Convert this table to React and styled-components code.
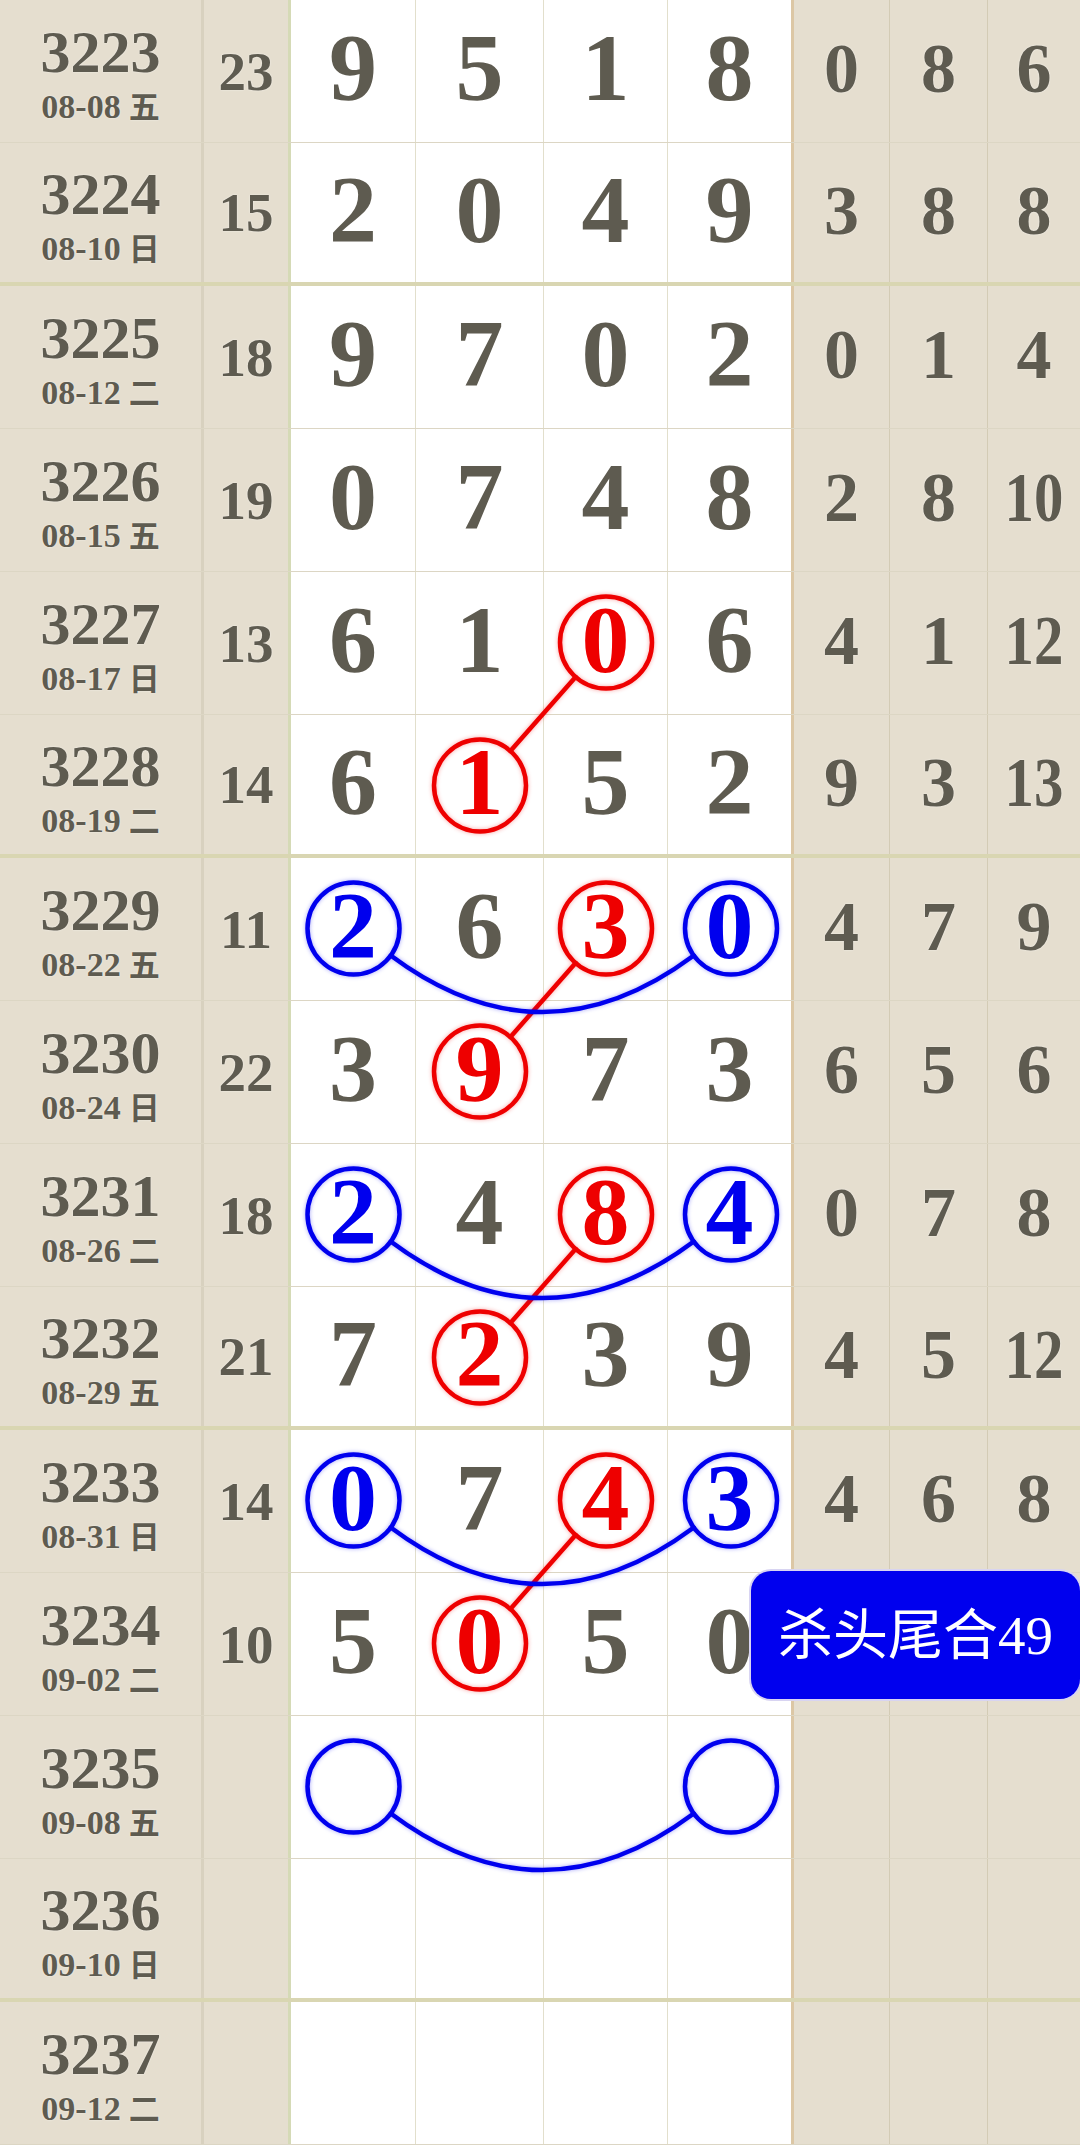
import React from 'react';
import styled, { createGlobalStyle } from 'styled-components';

const ROW_H = 143;
const COL_W = [204, 87, 125, 128, 124, 126, 96, 98, 92];
const INK = '#5e5b50';
const BLUE = '#0000ee';
const RED = '#ee0000';
const R = 46;

const COL_X = COL_W.reduce((acc, w) => [...acc, acc[acc.length - 1] + w], [0]);
const mainCenter = (i) => (COL_X[2 + i] + COL_X[3 + i]) / 2;
const rowCenter = (r) => r * ROW_H + ROW_H / 2 - 1;

const rows = [
  { no: 3223, date: '08-08', day: '五', sum: 23, main: [9, 5, 1, 8], tail: [0, 8, 6] },
  { no: 3224, date: '08-10', day: '日', sum: 15, main: [2, 0, 4, 9], tail: [3, 8, 8] },
  { no: 3225, date: '08-12', day: '二', sum: 18, main: [9, 7, 0, 2], tail: [0, 1, 4] },
  { no: 3226, date: '08-15', day: '五', sum: 19, main: [0, 7, 4, 8], tail: [2, 8, 10] },
  { no: 3227, date: '08-17', day: '日', sum: 13, main: [6, 1, 0, 6], tail: [4, 1, 12] },
  { no: 3228, date: '08-19', day: '二', sum: 14, main: [6, 1, 5, 2], tail: [9, 3, 13] },
  { no: 3229, date: '08-22', day: '五', sum: 11, main: [2, 6, 3, 0], tail: [4, 7, 9] },
  { no: 3230, date: '08-24', day: '日', sum: 22, main: [3, 9, 7, 3], tail: [6, 5, 6] },
  { no: 3231, date: '08-26', day: '二', sum: 18, main: [2, 4, 8, 4], tail: [0, 7, 8] },
  { no: 3232, date: '08-29', day: '五', sum: 21, main: [7, 2, 3, 9], tail: [4, 5, 12] },
  { no: 3233, date: '08-31', day: '日', sum: 14, main: [0, 7, 4, 3], tail: [4, 6, 8] },
  { no: 3234, date: '09-02', day: '二', sum: 10, main: [5, 0, 5, 0], tail: ['', '', ''] },
  { no: 3235, date: '09-08', day: '五', sum: '', main: ['', '', '', ''], tail: ['', '', ''] },
  { no: 3236, date: '09-10', day: '日', sum: '', main: ['', '', '', ''], tail: ['', '', ''] },
  { no: 3237, date: '09-12', day: '二', sum: '', main: ['', '', '', ''], tail: ['', '', ''] },
];

// rows closing a group of four get the heavier rule
const groupEnds = [1, 5, 9, 13];

const marks = [
  [4, 2, 'red'], [5, 1, 'red'],
  [6, 0, 'blue'], [6, 2, 'red'], [6, 3, 'blue'], [7, 1, 'red'],
  [8, 0, 'blue'], [8, 2, 'red'], [8, 3, 'blue'], [9, 1, 'red'],
  [10, 0, 'blue'], [10, 2, 'red'], [10, 3, 'blue'], [11, 1, 'red'],
  [12, 0, 'blue'], [12, 3, 'blue'],
];
const markColor = (r, c) => {
  const m = marks.find(([mr, mc]) => mr === r && mc === c);
  return m ? (m[2] === 'red' ? RED : BLUE) : null;
};

const redLinks = [[4, 5], [6, 7], [8, 9], [10, 11]];
const blueArcs = [6, 8, 10, 12];

const GlobalStyle = createGlobalStyle`
  html, body {
    margin: 0;
    padding: 0;
    background: #ffffff;
    overflow: hidden;
  }
  body {
    font-family: "Liberation Serif", "Noto Sans CJK SC", serif;
  }
`;

const Board = styled.div`
  position: relative;
  width: 1080px;
`;

const Row = styled.div`
  display: grid;
  grid-template-columns: ${COL_W.map((w) => `${w}px`).join(' ')};
  height: ${ROW_H}px;
  box-sizing: border-box;
  border-bottom: ${(p) => (p.$thick ? '4px solid #d9d6b2' : '1px solid #dcd6c4')};
`;

const Cell = styled.div`
  display: flex;
  align-items: center;
  justify-content: center;
  box-sizing: border-box;
  background: ${(p) => (p.$white ? '#ffffff' : '#e5decf')};
  border-right: ${(p) => p.$edge || 'none'};
  color: ${INK};
  font-weight: 700;
  text-shadow: 0 0 2px rgba(255, 255, 255, 0.7);
`;

const DateCell = styled(Cell)`
  flex-direction: column;
  gap: 7px;
  padding-top: 4px;
`;

const IssueNo = styled.div`
  font-size: 60px;
  line-height: 1;
`;

const IssueDate = styled.div`
  font-size: 34px;
  line-height: 1;
  display: flex;
  align-items: baseline;
  gap: 8px;
`;

const Weekday = styled.span`
  font-family: "Noto Sans CJK SC", sans-serif;
  font-size: 31px;
  font-weight: 700;
`;

const SumNum = styled.div`
  font-size: 55px;
  line-height: 1;
`;

const MainNum = styled.div`
  font-size: 96px;
  line-height: 1;
  padding-bottom: 6px;
  color: ${(p) => p.$color || INK};
`;

const TailNum = styled.div`
  font-size: 70px;
  line-height: 1;
  padding-bottom: 4px;
  transform: ${(p) => (p.$wide ? 'scaleX(0.84)' : 'none')};
`;

const Overlay = styled.svg`
  position: absolute;
  left: 0;
  top: 0;
  pointer-events: none;
`;

const Mark = styled.g`
  fill: none;
  stroke: ${(p) => p.$color};
  stroke-width: 4.5px;
  stroke-linecap: round;
  filter: drop-shadow(0 0 2px ${(p) => (p.$color === RED ? 'rgba(238,0,0,0.35)' : 'rgba(0,0,238,0.35)')});
`;

const Badge = styled.div`
  position: absolute;
  left: 751px;
  top: 1571px;
  width: 329px;
  height: 128px;
  box-sizing: border-box;
  display: flex;
  align-items: center;
  justify-content: center;
  background: ${BLUE};
  border-radius: 20px;
  box-shadow: 0 0 0 2px #d8d4f2;
  color: #ffffff;
  font-family: "Liberation Serif", "Noto Sans CJK SC", serif;
  font-size: 55px;
  line-height: 1;
`;

const edges = [
  '3px solid #d8d1bf',
  '3px solid #d5dab6',
  '1px solid #e2dfcc',
  '1px solid #e2dfcc',
  '1px solid #e2dfcc',
  '3px solid #dcc7a5',
  '1px solid #d3cbb5',
  '1px solid #d3cbb5',
  'none',
];

function arcPath(r) {
  const cy = rowCenter(r);
  const x1 = mainCenter(0);
  const x2 = mainCenter(3);
  const dx = R * Math.cos((36 * Math.PI) / 180);
  const dy = R * Math.sin((36 * Math.PI) / 180);
  return `M ${x1 + dx} ${cy + dy} Q ${(x1 + x2) / 2} ${cy + 140} ${x2 - dx} ${cy + dy}`;
}

function linkPoints(a, b) {
  const ax = mainCenter(2);
  const ay = rowCenter(a);
  const bx = mainCenter(1);
  const by = rowCenter(b);
  const len = Math.hypot(bx - ax, by - ay);
  const ux = (bx - ax) / len;
  const uy = (by - ay) / len;
  return { x1: ax + ux * R, y1: ay + uy * R, x2: bx - ux * R, y2: by - uy * R };
}

export default function App() {
  const height = rows.length * ROW_H;
  return (
    <>
      <GlobalStyle />
      <Board>
        {rows.map((row, r) => (
          <Row key={row.no} $thick={groupEnds.includes(r)}>
            <DateCell $edge={edges[0]}>
              <IssueNo>{row.no}</IssueNo>
              <IssueDate>
                {row.date}
                <Weekday>{row.day}</Weekday>
              </IssueDate>
            </DateCell>
            <Cell $edge={edges[1]}>
              <SumNum>{row.sum}</SumNum>
            </Cell>
            {row.main.map((n, i) => (
              <Cell key={i} $white $edge={edges[2 + i]}>
                <MainNum $color={markColor(r, i)}>{n}</MainNum>
              </Cell>
            ))}
            {row.tail.map((n, i) => (
              <Cell key={i} $edge={edges[6 + i]}>
                <TailNum $wide={String(n).length > 1}>{n}</TailNum>
              </Cell>
            ))}
          </Row>
        ))}

        <Overlay width="1080" height={height} viewBox={`0 0 1080 ${height}`}>
          <Mark $color={RED}>
            {marks
              .filter((m) => m[2] === 'red')
              .map(([r, c]) => (
                <circle key={`${r}-${c}`} cx={mainCenter(c)} cy={rowCenter(r)} r={R} />
              ))}
            {redLinks.map(([a, b]) => (
              <line key={a} {...linkPoints(a, b)} />
            ))}
          </Mark>
          <Mark $color={BLUE}>
            {marks
              .filter((m) => m[2] === 'blue')
              .map(([r, c]) => (
                <circle key={`${r}-${c}`} cx={mainCenter(c)} cy={rowCenter(r)} r={R} />
              ))}
            {blueArcs.map((r) => (
              <path key={r} d={arcPath(r)} />
            ))}
          </Mark>
        </Overlay>

        <Badge>杀头尾合49</Badge>
      </Board>
    </>
  );
}
